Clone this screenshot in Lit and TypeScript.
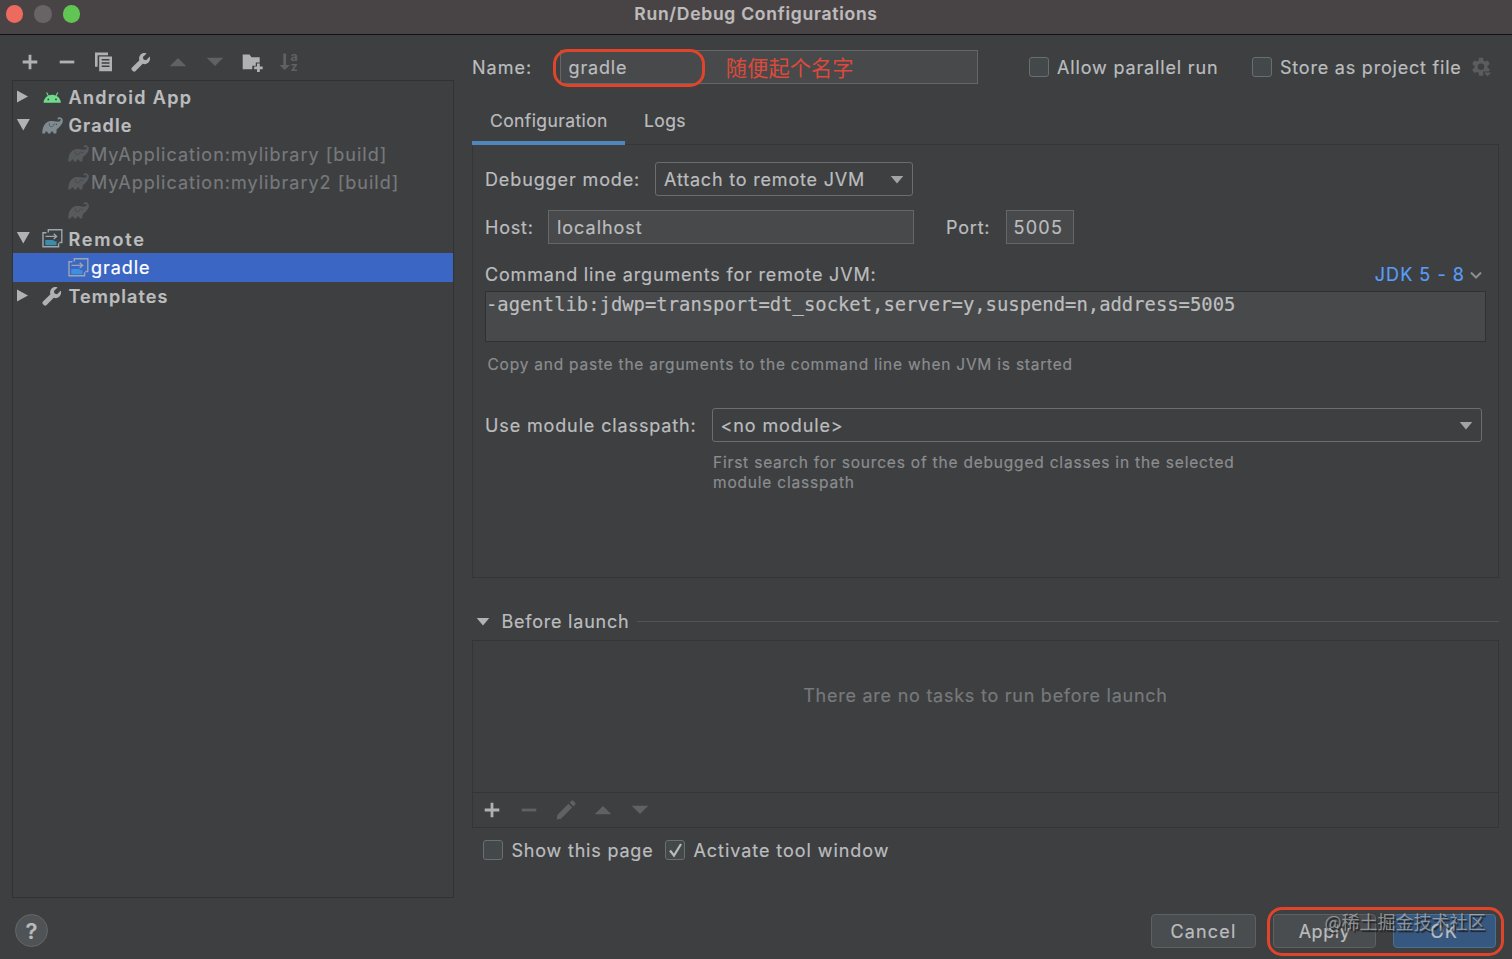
import { LitElement, html, css, svg, nothing } from "lit";
import { customElement, property } from "lit/decorators.js";

const elephant = svg`<path d="M.3 17.600C.3 13 1.600 8.600 4.600 6.500c2.200-1.500 4.900-1.600 7.400-1.300 2.300.1 4.500 1 5.800 0 1.400-1.100 1.100-2.300.1-2.300-.8 0-1.100.8-1.800.5-.9-.4-.6-1.500.2-1.900C18.500.6 20.900 2 20.900 4.600c0 2.900-1.900 4.900-3.800 6.700-.9.900-1.700 1.600-2.300 1.800l-.5 4.500h-2.800c0-1.400-.6-2-1.400-2s-1.500.6-1.500 2H5.800c0-1.400-.5-2-1.300-2s-1.400.6-1.400 2z"/><path class="ear" d="M7.300 7.200c-.6 2.300.5 3.600 2.200 3.400 1.600-.2 2.500-1.500 2.900-3" fill="none" stroke="#3d3f41" stroke-width=".6"/><circle class="ear" cx="14.300" cy="8.400" r=".6" fill="#3d3f41"/>`;

const wrench = svg`<path d="M18.800 4.600l-3.700 3.600-2.600-.6-.6-2.500 3.700-3.700c-2.400-.9-4.900-.3-6.300 1.500-1.300 1.600-1.500 3.500-.9 5.300L1 15.500c-.8.8-.8 1.900 0 2.700l.9.900c.8.8 1.900.8 2.700 0l7.200-7.300c1.900.7 3.900.3 5.400-1 1.700-1.500 2.300-3.900 1.600-6.200z"/>`;

const icons: Record<string, unknown> = {
  plus: svg`<path d="M8.600 2.700h2.800v5.900h5.900v2.800h-5.900v5.900H8.600v-5.900H2.700V8.600h5.900z"/>`,
  minus: svg`<path d="M2.700 8.600h14.600v2.800H2.700z"/>`,
  copy: svg`<path d="M1 .6h13v2.600H3.600v11.600H1z"/><path fill-rule="evenodd" d="M5.200 4.500H18v14.700H5.200zM7.700 7v1.500h7.800V7zm0 3.200v1.500h7.800v-1.500zm0 3.200v1.500h7.800v-1.500z"/>`,
  wrench,
  up: svg`<path d="M10 6l8.300 8.300H1.700z"/>`,
  down: svg`<path d="M10 14L1.700 5.700h16.600z"/>`,
  folder: svg`<path d="M.7 2.500h6.800l2 2.700h8.200v5.300h-3.900v3.300h-3.500v3.500H.7z"/><path d="M15 11.500h2.800v2.900h2.900v2.800h-2.900v2.900H15v-2.900h-2.900v-2.800H15z"/>`,
  pencil: svg`<path d="M12.400 3.800l3.800 3.800L5 18.700l-4.300.8.800-4.700zM13.700 2.600l1.600-1.600c.6-.6 1.500-.6 2.100 0l1.700 1.700c.6.6.6 1.500 0 2.100l-1.600 1.600z"/>`,
  elephant,
  android: svg`<path d="M1.500 15.700c.2-3.100 1.900-5.500 4.300-6.700L4.100 5.800l1-.5L6.800 8.500a8.700 8.700 0 0 1 6.800 0l1.700-3.200 1 .5-1.700 3.200c2.400 1.200 4.100 3.600 4.300 6.700z" fill="#6fdc8c"/><circle cx="6.300" cy="12.400" r=".9" fill="#3d3f41"/><circle cx="14" cy="12.400" r=".9" fill="#3d3f41"/>`,
  remote: svg`<g fill="none" stroke="#9aa7b0" stroke-width="1.400"><path d="M6.300 3.500V.7h13.500v12.800h-2.500"/><path d="M4.500 3.800H1v14h15.600v-3.500"/><path d="M3.500 7.400h11M11.700 4.700l2.900 2.700-2.900 2.700"/></g><path d="M3.300 10.900h7.700l1.600 1.300h1.900v4H3.300z" class="screen"/>`,
  check: svg`<path d="M4 9.500l4 5L15 3" fill="none" stroke="#bbb" stroke-width="2.200"/>`,
  chevron: svg`<path d="M2.800 5L10 12.200 17.200 5" fill="none" stroke="#8b8d8f" stroke-width="2.800"/>`,
  gear: svg`<path fill-rule="evenodd" d="M8 .8h4l.5 2.900 1.500.9 2.800-1 2 3.400-2.300 1.900v1.700l2.300 1.900-2 3.400-2.800-1-1.500.9-.5 2.900H8l-.5-2.900-1.500-.9-2.800 1-2-3.400 2.300-1.900V8.900L1.200 7l2-3.400 2.800 1 1.500-.9zM10 6.500a3.300 3.300 0 1 0 0 6.600 3.300 3.300 0 0 0 0-6.600z"/><path d="M12 15h9l-4.500 5z" stroke="#3d3f41"/>`,
};

@customElement("ui-icon")
export class UiIcon extends LitElement {
  @property() name = "";
  static styles = css`
    :host { display: inline-block; flex: none; width: 20px; height: 20px; color: #afb1b3; }
    svg { display: block; width: 100%; height: 100%; overflow: visible; fill: currentColor; }
    .screen { fill: var(--screen, #3d8cae); }
    .az { font: 700 12.500px Inter, sans-serif; letter-spacing: 0; }
  `;
  render() {
    if (this.name === "sort") {
      return html`<svg viewBox="0 0 20 20"><path d="M4.300 1.500h2.800v11.500h3.800l-5.200 5-5.200-5h3.800z"/><text class="az" x="11.500" y="9">a</text><text class="az" x="11.500" y="18.800">z</text></svg>`;
    }
    return html`<svg viewBox="0 0 20 20">${icons[this.name]}</svg>`;
  }
}

interface Row { label: string; cls: string; icon: string; arrow?: "right" | "open"; child?: boolean; }

const rows: Row[] = [
  { label: "Android App", cls: "android", icon: "android", arrow: "right" },
  { label: "Gradle", cls: "gradle", icon: "elephant", arrow: "open" },
  { label: "MyApplication:mylibrary [build]", cls: "dim", icon: "elephant", child: true },
  { label: "MyApplication:mylibrary2 [build]", cls: "dim", icon: "elephant", child: true },
  { label: "", cls: "dim", icon: "elephant", child: true },
  { label: "Remote", cls: "remote", icon: "remote", arrow: "open" },
  { label: "gradle", cls: "selected", icon: "remote", child: true },
  { label: "Templates", cls: "templates", icon: "wrench", arrow: "right" },
];

@customElement("app-root")
export class AppRoot extends LitElement {
  static styles = css`
    :host {
      display: flex; flex-direction: column; width: 1512px; height: 959px; overflow: hidden;
      background: #3d3f41; color: #bbbcbd;
      font: 400 18px/24px Inter, "Noto Sans CJK SC", sans-serif; letter-spacing: .84px;
      -webkit-text-stroke: .2px; white-space: nowrap;
    }
    * { box-sizing: border-box; }
    .titlebar { height: 35px; flex: none; display: grid; grid-template-columns: 1fr auto 1fr; background: #484344; border-bottom: 1px solid #111; }
    .lights { display: flex; gap: 11px; padding: 5px 0 0 5.500px; }
    .light { width: 17.500px; height: 17.500px; border-radius: 50%; background: #ed6a5e; }
    .light.idle { background: #686364; }
    .light.zoom { background: #61c554; }
    .title { font-size: 17.500px; font-weight: 600; letter-spacing: .75px; line-height: 27px; color: #bdbbbb; }
    .main { display: flex; height: 863px; flex: none; }
    .side { width: 442px; margin-left: 12px; flex: none; }
    .tools { display: flex; height: 45px; padding-top: 8.500px; margin-left: -1px; }
    .tool { width: 37px; height: 37px; display: grid; place-items: center; }
    .off ui-icon { color: #5f6163; }
    .tree { height: 817.500px; border: 1px solid #303234; padding-top: 2px; }
    .row { height: 28.400px; display: flex; align-items: center; font-weight: 600; padding-left: 3px; }
    .row span { padding-top: 1px; }
    .row.dim span, .row.templates span { padding-top: 1.600px; }
    .row ui-icon { color: #7f8b91; margin-right: 7px; }
    .row.child { padding-left: 55px; font-weight: 400; }
    .row.child ui-icon { margin-right: 3px; }
    .arrow { width: 15px; height: 14px; margin-right: 10.500px; flex: none; fill: #b0b2b4; }
    .android { letter-spacing: 1.340px; }
    .gradle { letter-spacing: 1.100px; }
    .dim { letter-spacing: 1.010px; color: #77797b; }
    .row.dim ui-icon { color: #575b5e; }
    .remote { letter-spacing: 1.850px; }
    .templates { letter-spacing: 1.060px; }
    .row.templates ui-icon { color: #afb1b3; }
    .row.selected { background: #3b66c4; color: #fff; letter-spacing: .94px; --screen: #3f8fe0; }
    .editor { width: 1027px; margin-left: 18px; flex: none; }
    .namerow { display: flex; height: 34px; margin-top: 15px; align-items: center; }
    .name-label { width: 87.500px; letter-spacing: 1px; }
    .namerow > span, .line > span, .check span { padding-top: 2px; }
    .field { height: 34px; border: 1px solid #646668; background: #47494b; display: flex; align-items: center; padding: 1.500px 0 0 8px; }
    .namefield { position: relative; width: 418px; padding-left: 8px; }
    .ring { position: absolute; border: 3px solid #e0452b; border-radius: 15px; pointer-events: none; }
    .namefield .ring { left: -7.500px; top: -2px; width: 151.500px; height: 38px; }
    .note { color: #dd4a3b; font: 400 21.300px/30px "Noto Sans CJK SC", sans-serif; letter-spacing: 0; margin: -2px 0 0 98.500px; -webkit-text-stroke: 0; }
    .box { width: 20px; height: 20px; border: 1px solid #6b6e70; border-radius: 3px; background: #43494a; flex: none; margin-right: 8.500px; display: grid; }
    .check { display: flex; align-items: center; }
    .parallel { width: 223px; margin-left: 51px; }
    .store { width: 219.500px; letter-spacing: .79px; }
    .namerow ui-icon { color: #5b5d5d; }
    .tabs { position: relative; display: flex; height: 42px; margin-top: 19px; font-size: 17.500px; letter-spacing: .4px; line-height: 36px; }
    .tab { height: 42px; padding: 0 18px; }
    .tab.active { width: 153px; border-bottom: 4px solid #4f86be; margin-right: 1px; }
    .panel { height: 433.500px; margin-top: -1px; border: 1px solid #333537; padding: 17px 12px 0; }
    .line { display: flex; align-items: center; height: 34px; }
    .combo { height: 34px; border: 1px solid #6b6e70; border-radius: 3px; display: flex; align-items: center; justify-content: space-between; padding: 1.500px 8.500px 0 8px; }
    .tri { width: 14px; height: 8px; fill: #a1a3a5; flex: none; }
    .mode-label { width: 170px; letter-spacing: .88px; }
    .mode { width: 258px; letter-spacing: .81px; }
    .hostline { margin-top: 14px; }
    .host-label { width: 63px; letter-spacing: .8px; }
    .host { width: 365.500px; letter-spacing: .98px; }
    .port-label { width: 60px; margin-left: 32.500px; letter-spacing: .8px; }
    .port { width: 68px; padding-left: 6.500px; letter-spacing: 1.250px; }
    .cmdline { height: 24px; margin-top: 19px; justify-content: space-between; letter-spacing: .82px; }
    .line.cmdline > span { padding-top: 0; }
    .jdk { display: flex; align-items: center; color: #589df6; letter-spacing: 1.030px; }
    .jdk ui-icon { width: 14px; height: 14px; margin: 1px 3px 0 4px; }
    .args { height: 51px; width: 1001px; margin: 4px 0 0; border: 1px solid #2f3234; background: #47494b; font: 18.870px/25px "DejaVu Sans Mono", monospace; letter-spacing: 0; color: #bdbebf; }
    .hint { font-size: 15.500px; line-height: 20px; letter-spacing: .775px; color: #8b8d8f; margin: 12.500px 0 0 2.500px; }
    .moduleline { margin-top: 33.500px; }
    .module-label { width: 227px; letter-spacing: .87px; }
    .module { width: 770px; letter-spacing: .88px; padding-left: 7.500px; }
    .module-hint { margin: 11px 0 0 228px; letter-spacing: .8px; }
    .launch { display: flex; align-items: center; height: 24px; margin-top: 32px; letter-spacing: .77px; }
    .launch .tri { margin: 0 11.500px 0 4px; fill: #b0b2b4; }
    .rule { height: 1px; flex: 1; background: #515456; margin-left: 8px; }
    .tasks { height: 188.500px; border: 1px solid #333537; margin-top: 6px; }
    .empty { height: 152px; border-bottom: 1px solid #333537; text-align: center; padding-top: 43px; color: #77797b; letter-spacing: .75px; }
    .tasks .tools { padding: 0; margin: -1px 0 0; height: 36px; }
    .options { display: flex; margin: 9px 0 0 11px; }
    .show { width: 182px; letter-spacing: .8px; }
    .activate { letter-spacing: .94px; }
    .footer { display: flex; align-items: flex-start; padding: 16px 0 0 15px; flex: 1; }
    .help { width: 33px; height: 33px; border-radius: 50%; border: 1px solid #656769; background: #505355; display: grid; place-items: center; font-size: 22px; font-weight: 600; letter-spacing: 0; color: #b8babb; margin-right: 1103px; }
    .btn { height: 34px; border: 1px solid #5e6162; border-radius: 4px; background: #4a4d4f; text-align: center; line-height: 33px; }
    .cancel { width: 105px; letter-spacing: 1.150px; }
    .pair { position: relative; display: flex; gap: 17px; margin-left: 17px; }
    .apply { width: 103px; letter-spacing: .52px; }
    .ok { width: 103px; background: #365880; border-color: #4c708c; letter-spacing: .9px; padding-right: 1px; }
    .pair .ring { left: -6px; top: -7px; width: 237px; height: 49px; }
    .mark { position: absolute; left: 51.500px; top: -7.500px; font: 18px/28px "Noto Sans CJK SC", sans-serif; letter-spacing: 0; color: rgba(190, 194, 198, .65); text-shadow: 1.500px 1.500px 1px #222; -webkit-text-stroke: 0; }
  `;

  private tool(name: string, off = false) {
    return html`<div class="tool ${off ? "off" : ""}"><ui-icon name=${name}></ui-icon></div>`;
  }

  private tri() {
    return html`<svg class="tri" viewBox="0 0 14 8"><path d="M.7 0h12.600L7 7.600z"/></svg>`;
  }

  private row(r: Row) {
    const d = r.arrow === "right" ? "M1 .5v12l11-6z" : "M.8 0h13L7.300 11.500z";
    return html`<div class="row ${r.cls} ${r.child ? "child" : ""}">
      ${r.arrow ? html`<svg class="arrow" viewBox="0 0 15 14"><path d=${d} /></svg>` : nothing}
      <ui-icon name=${r.icon}></ui-icon><span>${r.label}</span>
    </div>`;
  }

  render() {
    return html`
      <div class="titlebar">
        <div class="lights"><i class="light"></i><i class="light idle"></i><i class="light zoom"></i></div>
        <div class="title">Run/Debug Configurations</div>
      </div>
      <div class="main">
        <div class="side">
          <div class="tools">
            ${this.tool("plus")}${this.tool("minus")}${this.tool("copy")}${this.tool("wrench")}
            ${this.tool("up", true)}${this.tool("down", true)}${this.tool("folder")}${this.tool("sort", true)}
          </div>
          <div class="tree">${rows.map((r) => this.row(r))}</div>
        </div>
        <div class="editor">
          <div class="namerow">
            <span class="name-label">Name:</span>
            <div class="field namefield"><span>gradle</span><span class="note">随便起个名字</span><i class="ring"></i></div>
            <div class="check parallel"><i class="box"></i><span>Allow parallel run</span></div>
            <div class="check store"><i class="box"></i><span>Store as project file</span></div>
            <ui-icon name="gear"></ui-icon>
          </div>
          <div class="tabs"><div class="tab active">Configuration</div><div class="tab">Logs</div></div>
          <div class="panel">
            <div class="line"><span class="mode-label">Debugger mode:</span><div class="combo mode">Attach to remote JVM${this.tri()}</div></div>
            <div class="line hostline">
              <span class="host-label">Host:</span><div class="field host">localhost</div>
              <span class="port-label">Port:</span><div class="field port">5005</div>
            </div>
            <div class="line cmdline"><span>Command line arguments for remote JVM:</span><span class="jdk">JDK 5 - 8<ui-icon name="chevron"></ui-icon></span></div>
            <div class="args">-agentlib:jdwp=transport=dt_socket,server=y,suspend=n,address=5005</div>
            <div class="hint">Copy and paste the arguments to the command line when JVM is started</div>
            <div class="line moduleline"><span class="module-label">Use module classpath:</span><div class="combo module">&lt;no module&gt;${this.tri()}</div></div>
            <div class="hint module-hint">First search for sources of the debugged classes in the selected<br>module classpath</div>
          </div>
          <div class="launch">${this.tri()}Before launch<i class="rule"></i></div>
          <div class="tasks">
            <div class="empty">There are no tasks to run before launch</div>
            <div class="tools">${this.tool("plus")}${this.tool("minus", true)}${this.tool("pencil", true)}${this.tool("up", true)}${this.tool("down", true)}</div>
          </div>
          <div class="options">
            <div class="check show"><i class="box"></i><span>Show this page</span></div>
            <div class="check activate"><i class="box"><ui-icon name="check"></ui-icon></i><span>Activate tool window</span></div>
          </div>
        </div>
      </div>
      <div class="footer">
        <div class="help">?</div>
        <div class="btn cancel">Cancel</div>
        <div class="pair">
          <div class="btn apply">Apply</div><div class="btn ok">OK</div>
          <span class="mark">@稀土掘金技术社区</span><i class="ring"></i>
        </div>
      </div>`;
  }
}
